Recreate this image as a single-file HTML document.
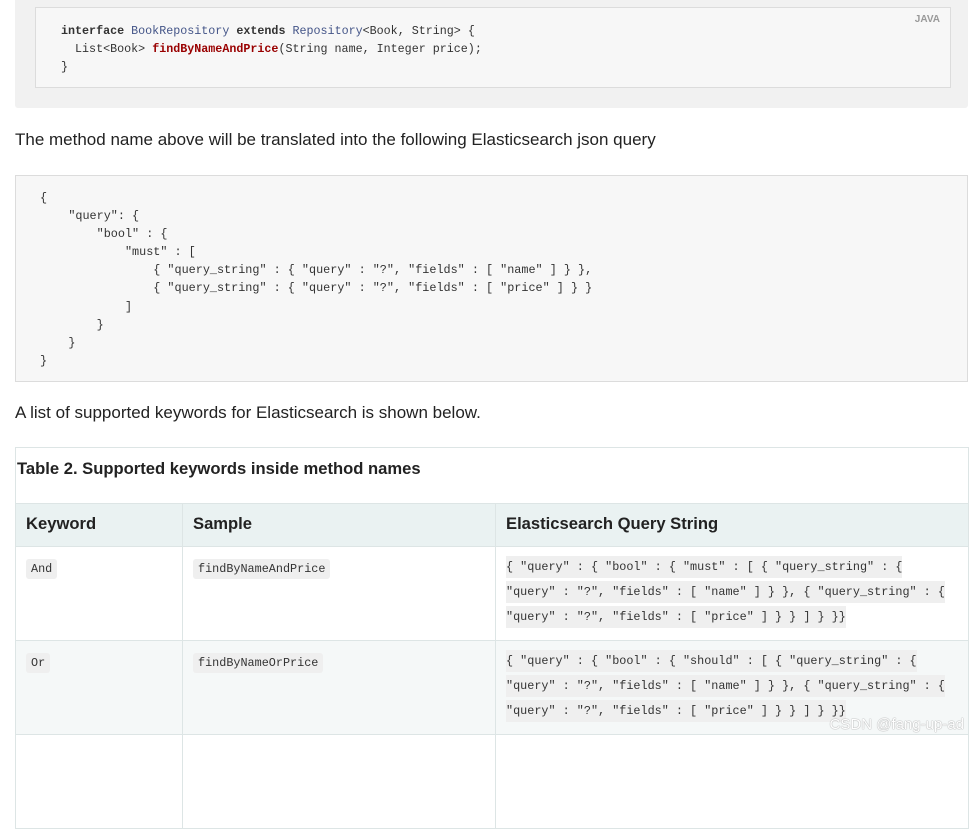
<!DOCTYPE html>
<html><head><meta charset="utf-8"><style>
*{margin:0;padding:0;box-sizing:border-box}
body{width:978px;height:744px;overflow:hidden;background:#fff;font-family:"Liberation Sans",sans-serif;color:#222;position:relative}
.mono{font-family:"Liberation Mono",monospace}
.abs{position:absolute}
.outer{left:15px;top:0;width:953px;height:108px;background:#f1f1f1;border-radius:0 0 3px 3px}
.inner{left:35px;top:7px;width:916px;height:81px;background:#f7f7f7;border:1px solid #dcdcdc}
.inner pre{position:absolute;left:25px;top:14px;font-size:11.7px;line-height:18px;color:#333}
.kw{font-weight:bold;color:#333}.ty{color:#445588}.fn{color:#990000;font-weight:bold}
.java{right:10px;top:6px;font-size:10px;color:#999;font-weight:bold;font-family:"Liberation Sans",sans-serif}
p{font-size:17px;color:#222}
.json{left:15px;top:175px;width:953px;height:207px;background:#f7f7f7;border:1px solid #dcdcdc}
.json pre{position:absolute;left:24px;top:13px;font-size:11.8px;line-height:18.1px;color:#333}
table{position:absolute;left:15px;top:503px;width:954px;border-collapse:collapse}
.cap{left:15px;top:447px;width:954px;height:56px;border:1px solid #dde5e5;border-bottom:none}
.cap b{position:absolute;left:1px;top:11px;font-size:16.6px}
th,td{border:1px solid #dde5e5;text-align:left;vertical-align:top}
th{background:#eaf2f2;font-size:16.6px;padding:10px 10px 0;font-weight:bold}
td{padding:12px 10px 0}
tr.h{height:43px}
tr.r{height:94px}
tr.alt td{background:#f5f8f8}
code{font-family:"Liberation Mono",monospace;font-size:11.8px;background:#efefef;padding:3px 5px;border-radius:3px;color:#333}
.q{font-family:"Liberation Mono",monospace;font-size:11.8px;line-height:25px;color:#333;padding-top:8px}
.q span{background:#efefef;padding:4px 0}
</style></head><body>
<div class="abs outer"></div>
<div class="abs inner"><pre class="mono"><span class="kw">interface</span> <span class="ty">BookRepository</span> <span class="kw">extends</span> <span class="ty">Repository</span>&lt;Book, String&gt; {
  List&lt;Book&gt; <span class="fn">findByNameAndPrice</span>(String name, Integer price);
}</pre><div class="abs java">JAVA</div></div>
<p class="abs" style="left:15px;top:130px">The method name above will be translated into the following Elasticsearch json query</p>
<div class="abs json"><pre class="mono">{
    "query": {
        "bool" : {
            "must" : [
                { "query_string" : { "query" : "?", "fields" : [ "name" ] } },
                { "query_string" : { "query" : "?", "fields" : [ "price" ] } }
            ]
        }
    }
}</pre></div>
<p class="abs" style="left:15px;top:403px">A list of supported keywords for Elasticsearch is shown below.</p>
<div class="abs cap"><b>Table 2. Supported keywords inside method names</b></div>
<table>
<tr class="h"><th style="width:167px">Keyword</th><th style="width:313px">Sample</th><th>Elasticsearch Query String</th></tr>
<tr class="r"><td><code>And</code></td><td><code>findByNameAndPrice</code></td><td class="q"><span>{ "query" : { "bool" : { "must" : [ { "query_string" : {</span><br><span>"query" : "?", "fields" : [ "name" ] } }, { "query_string" : {</span><br><span>"query" : "?", "fields" : [ "price" ] } } ] } }}</span></td></tr>
<tr class="r alt"><td><code>Or</code></td><td><code>findByNameOrPrice</code></td><td class="q"><span>{ "query" : { "bool" : { "should" : [ { "query_string" : {</span><br><span>"query" : "?", "fields" : [ "name" ] } }, { "query_string" : {</span><br><span>"query" : "?", "fields" : [ "price" ] } } ] } }}</span></td></tr>
<tr class="r"><td></td><td></td><td></td></tr>
</table>
<div class="abs" style="right:14px;top:716px;font-size:15px;color:#fff;text-shadow:0 0 1px #aaa,0 0 1px #999">CSDN @fang-up-ad</div>
</body></html>
